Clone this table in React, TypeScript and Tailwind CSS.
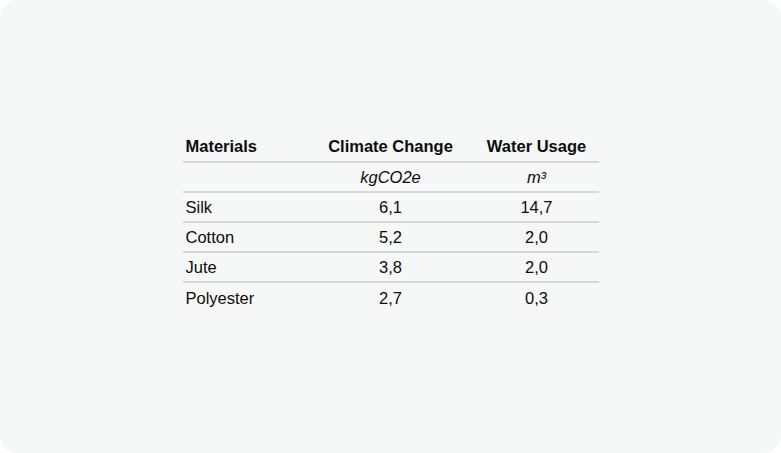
const rows = [
  { name: "Silk", climate: "6,1", water: "14,7" },
  { name: "Cotton", climate: "5,2", water: "2,0" },
  { name: "Jute", climate: "3,8", water: "2,0" },
  { name: "Polyester", climate: "2,7", water: "0,3" },
];

export default function App() {
  return (
    <div className="w-[781px] h-[453px] bg-white">
      <div
        className="w-full h-full rounded-[18px] bg-[#f6f7f7] flex items-center justify-center pb-[10px] text-[#0d0d0d]"
        style={{ fontFamily: '"Liberation Sans", Arial, sans-serif' }}
      >
        <table className="border-collapse text-[16.5px] leading-[18px]">
          <thead>
            <tr className="h-[31px] border-b-2 border-[#d8d8d8]">
              <th className="w-[124px] text-left pl-[3px] font-bold">Materials</th>
              <th className="w-[168px] text-center font-bold">Climate Change</th>
              <th className="w-[124px] text-center font-bold">Water Usage</th>
            </tr>
          </thead>
          <tbody>
            <tr className="h-[30px] border-b-2 border-[#d8d8d8]">
              <td></td>
              <td className="text-center italic">kgCO2e</td>
              <td className="text-center italic">m³</td>
            </tr>
            {rows.map((r, i) => (
              <tr
                key={r.name}
                className={i < rows.length - 1 ? "h-[30px] border-b-2 border-[#d8d8d8]" : "h-[30px]"}
              >
                <td className="pl-[3px]">{r.name}</td>
                <td className="text-center">{r.climate}</td>
                <td className="text-center">{r.water}</td>
              </tr>
            ))}
          </tbody>
        </table>
      </div>
    </div>
  );
}
